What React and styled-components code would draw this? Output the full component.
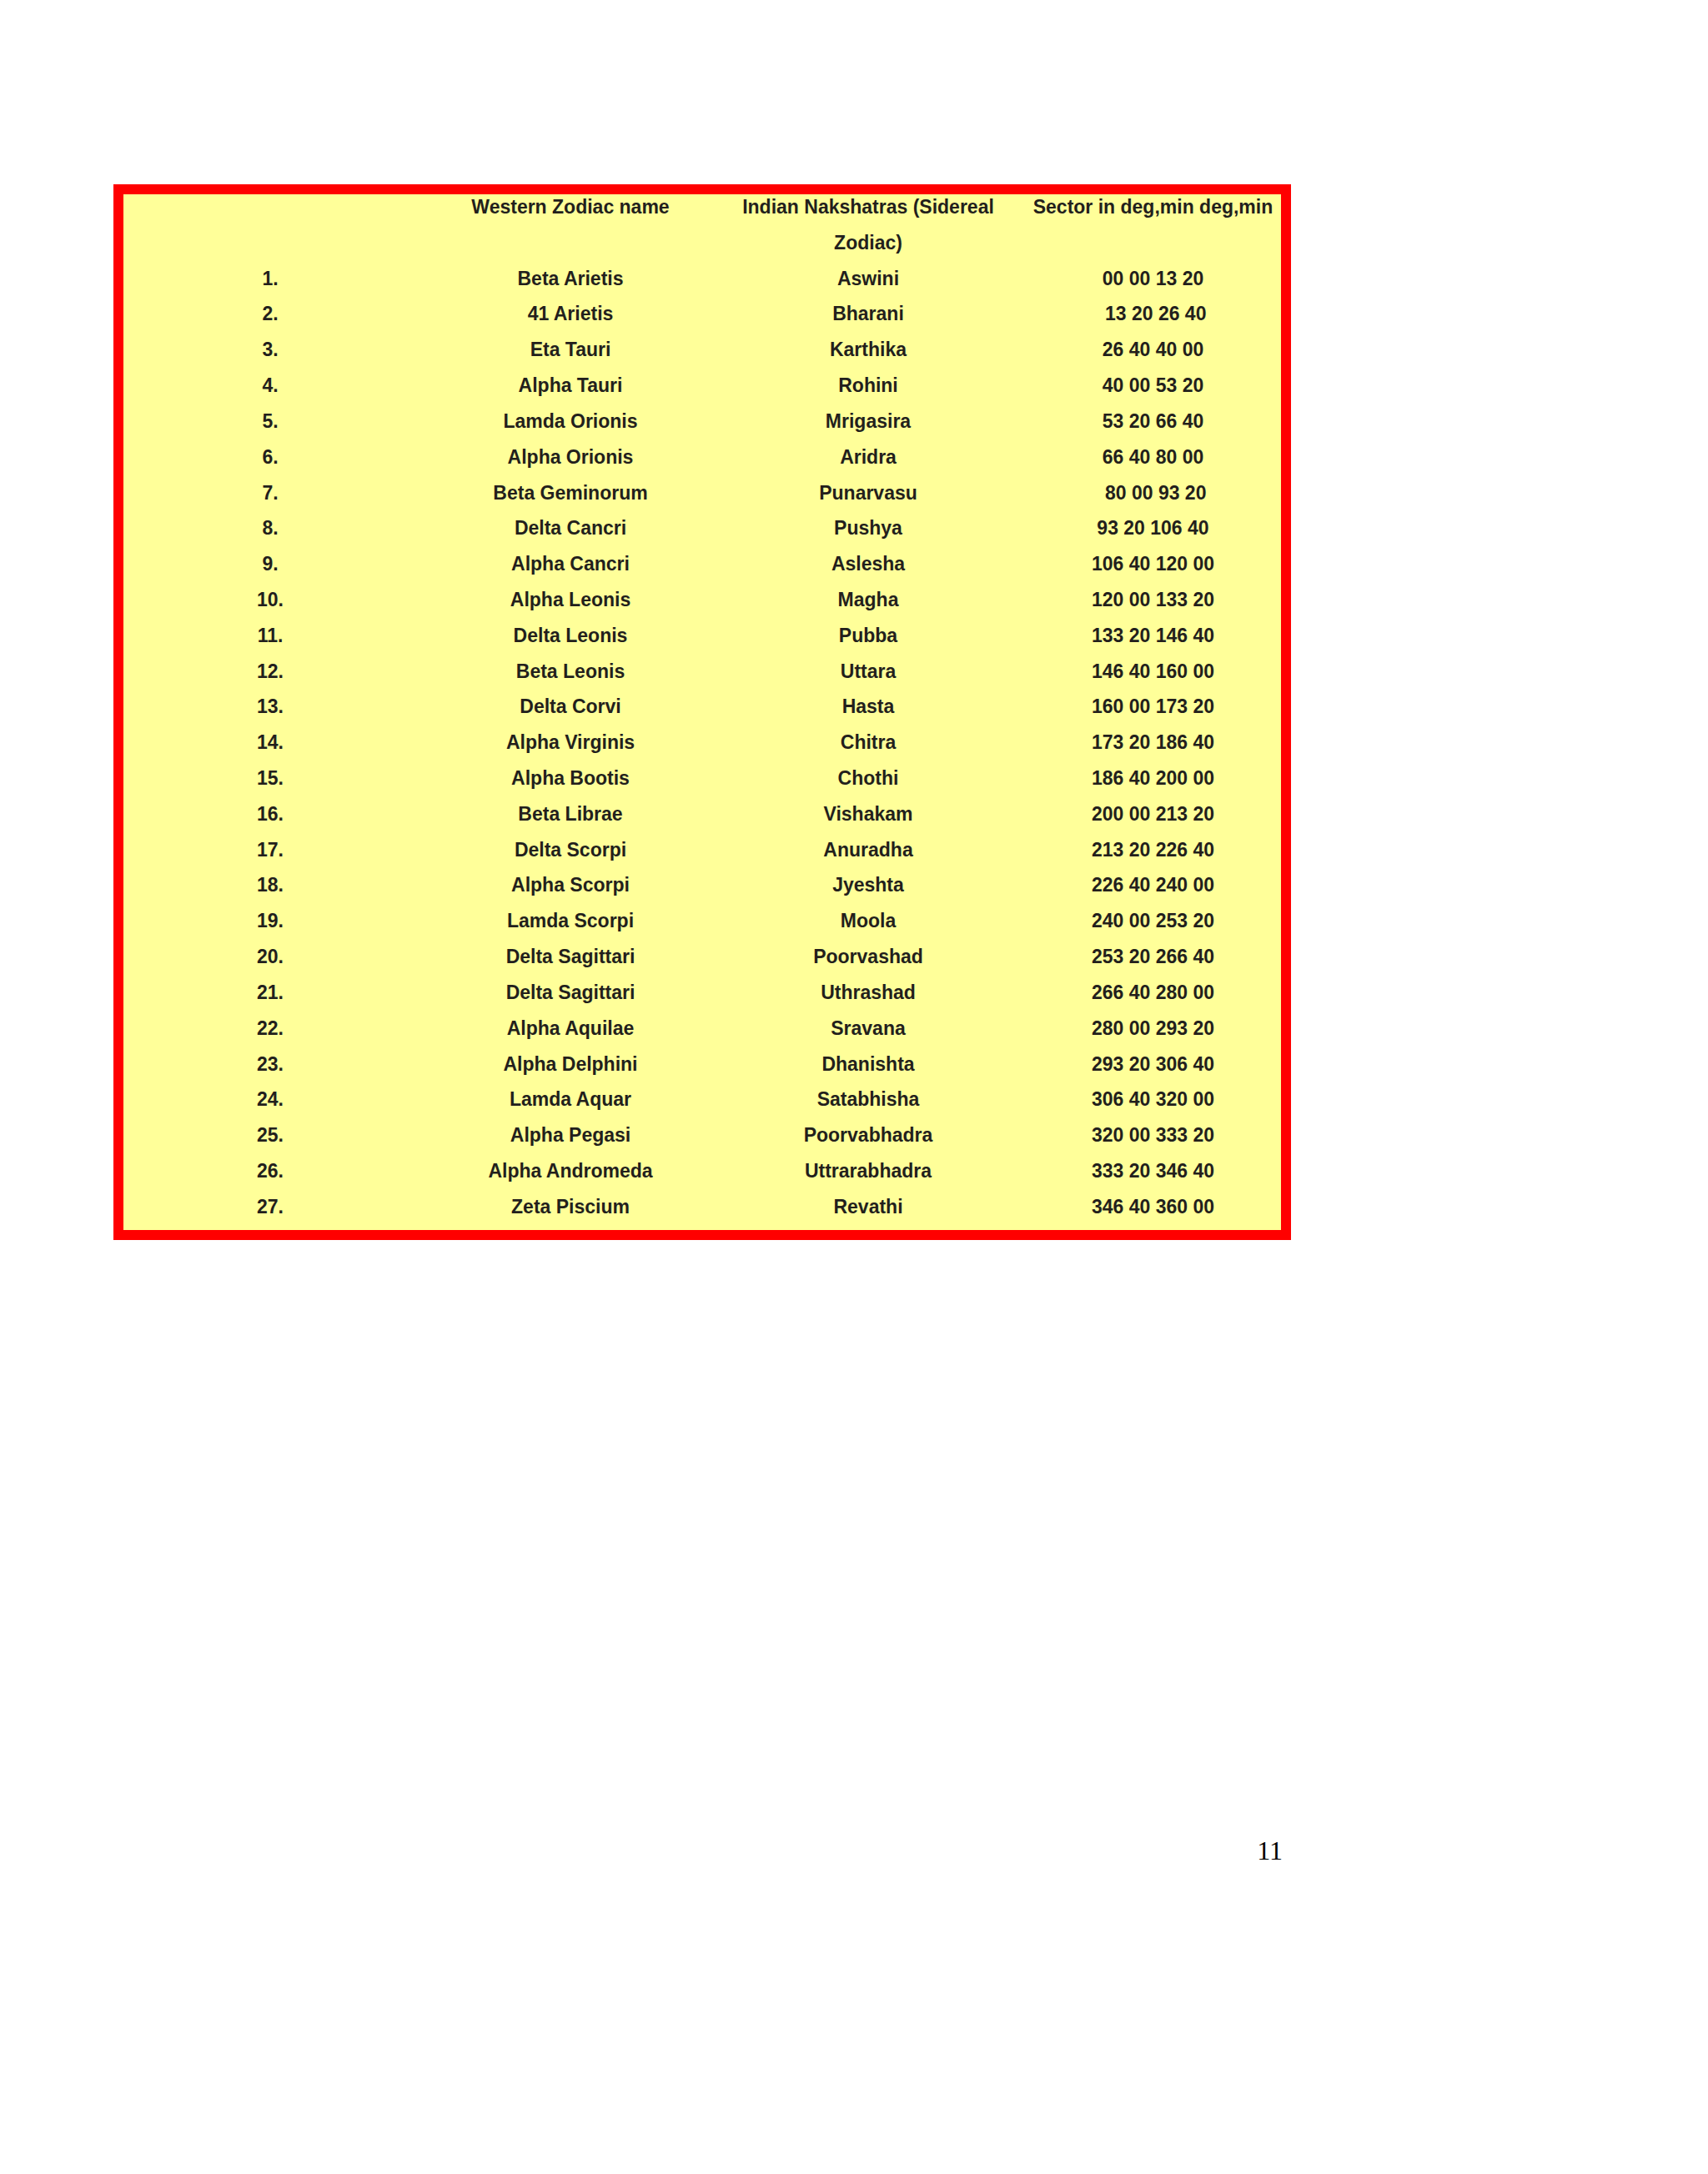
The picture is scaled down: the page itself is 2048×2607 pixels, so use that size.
import React from "react";
import styled, { createGlobalStyle } from "styled-components";

/** 기본 스타일 */
const GlobalStyle = createGlobalStyle`
  html, body {
    margin: 0;
    padding: 0;
    background: #ffffff;
  }
`;

const Page = styled.div`
  width: 2048px;
  min-height: 2607px;
  box-sizing: border-box;
  padding: 221px 0 0 136px;
  background: #ffffff;
`;

/** 빨간 테두리 박스 */
const Frame = styled.div`
  width: 1412px;
  box-sizing: border-box;
  border: 12px solid #ff0000;
  background: #ffff99;
`;

const Table = styled.div`
  display: grid;
  grid-template-columns: 352px 368px 346px 1fr;
  margin-top: -6px;
  padding-bottom: 6px;

  font-family: "Liberation Sans", Arial, Helvetica, sans-serif;
  font-weight: 700;
  font-size: 23px;
  line-height: 42.82px;
  color: #231f1c;
`;

const Cell = styled.div`
  text-align: center;
  white-space: pre;
  padding-left: ${(p) => p.$shift || 0}px;
`;

const PageNumber = styled.div`
  width: 1412px;
  box-sizing: border-box;
  margin-top: 716px;
  padding-right: 10px;
  text-align: right;
  font-family: "Liberation Serif", "Times New Roman", serif;
  font-size: 32px;
  line-height: 32px;
  color: #000000;
`;

const rows = [
  ["Beta Arietis", "Aswini", "00 00 13 20"],
  ["41 Arietis", "Bharani", " 13 20 26 40"],
  ["Eta Tauri", "Karthika", "26 40 40 00"],
  ["Alpha Tauri", "Rohini", "40 00 53 20"],
  ["Lamda Orionis", "Mrigasira", "53 20 66 40"],
  ["Alpha Orionis", "Aridra", "66 40 80 00"],
  ["Beta Geminorum", "Punarvasu", " 80 00 93 20"],
  ["Delta Cancri", "Pushya", "93 20 106 40"],
  ["Alpha Cancri", "Aslesha", "106 40 120 00"],
  ["Alpha Leonis", "Magha", "120 00 133 20"],
  ["Delta Leonis", "Pubba", "133 20 146 40"],
  ["Beta Leonis", "Uttara", "146 40 160 00"],
  ["Delta Corvi", "Hasta", "160 00 173 20"],
  ["Alpha Virginis", "Chitra", "173 20 186 40"],
  ["Alpha Bootis", "Chothi", "186 40 200 00"],
  ["Beta Librae", "Vishakam", "200 00 213 20"],
  ["Delta Scorpi", "Anuradha", "213 20 226 40"],
  ["Alpha Scorpi", "Jyeshta", "226 40 240 00"],
  ["Lamda Scorpi", "Moola", "240 00 253 20"],
  ["Delta Sagittari", "Poorvashad", "253 20 266 40"],
  ["Delta Sagittari", "Uthrashad", "266 40 280 00"],
  ["Alpha Aquilae", "Sravana", "280 00 293 20"],
  ["Alpha Delphini", "Dhanishta", "293 20 306 40"],
  ["Lamda Aquar", "Satabhisha", "306 40 320 00"],
  ["Alpha Pegasi", "Poorvabhadra", "320 00 333 20"],
  ["Alpha Andromeda", "Uttrarabhadra", "333 20 346 40"],
  ["Zeta Piscium", "Revathi", "346 40 360 00"],
];

const App = () => {
  return (
    <Page>
      <GlobalStyle />
      <Frame>
        <Table>
          {/* 헤더 */}
          <Cell />
          <Cell>Western Zodiac name</Cell>
          <Cell>
            Indian Nakshatras (Sidereal
            <br />
            Zodiac)
          </Cell>
          <Cell $shift={15}>Sector in deg,min deg,min</Cell>

          {rows.map(([western, indian, sector], i) => (
            <React.Fragment key={i}>
              <Cell>{i + 1}.</Cell>
              <Cell>{western}</Cell>
              <Cell>{indian}</Cell>
              <Cell $shift={15}>{sector}</Cell>
            </React.Fragment>
          ))}
        </Table>
      </Frame>
      <PageNumber>11</PageNumber>
    </Page>
  );
};

export default App;
